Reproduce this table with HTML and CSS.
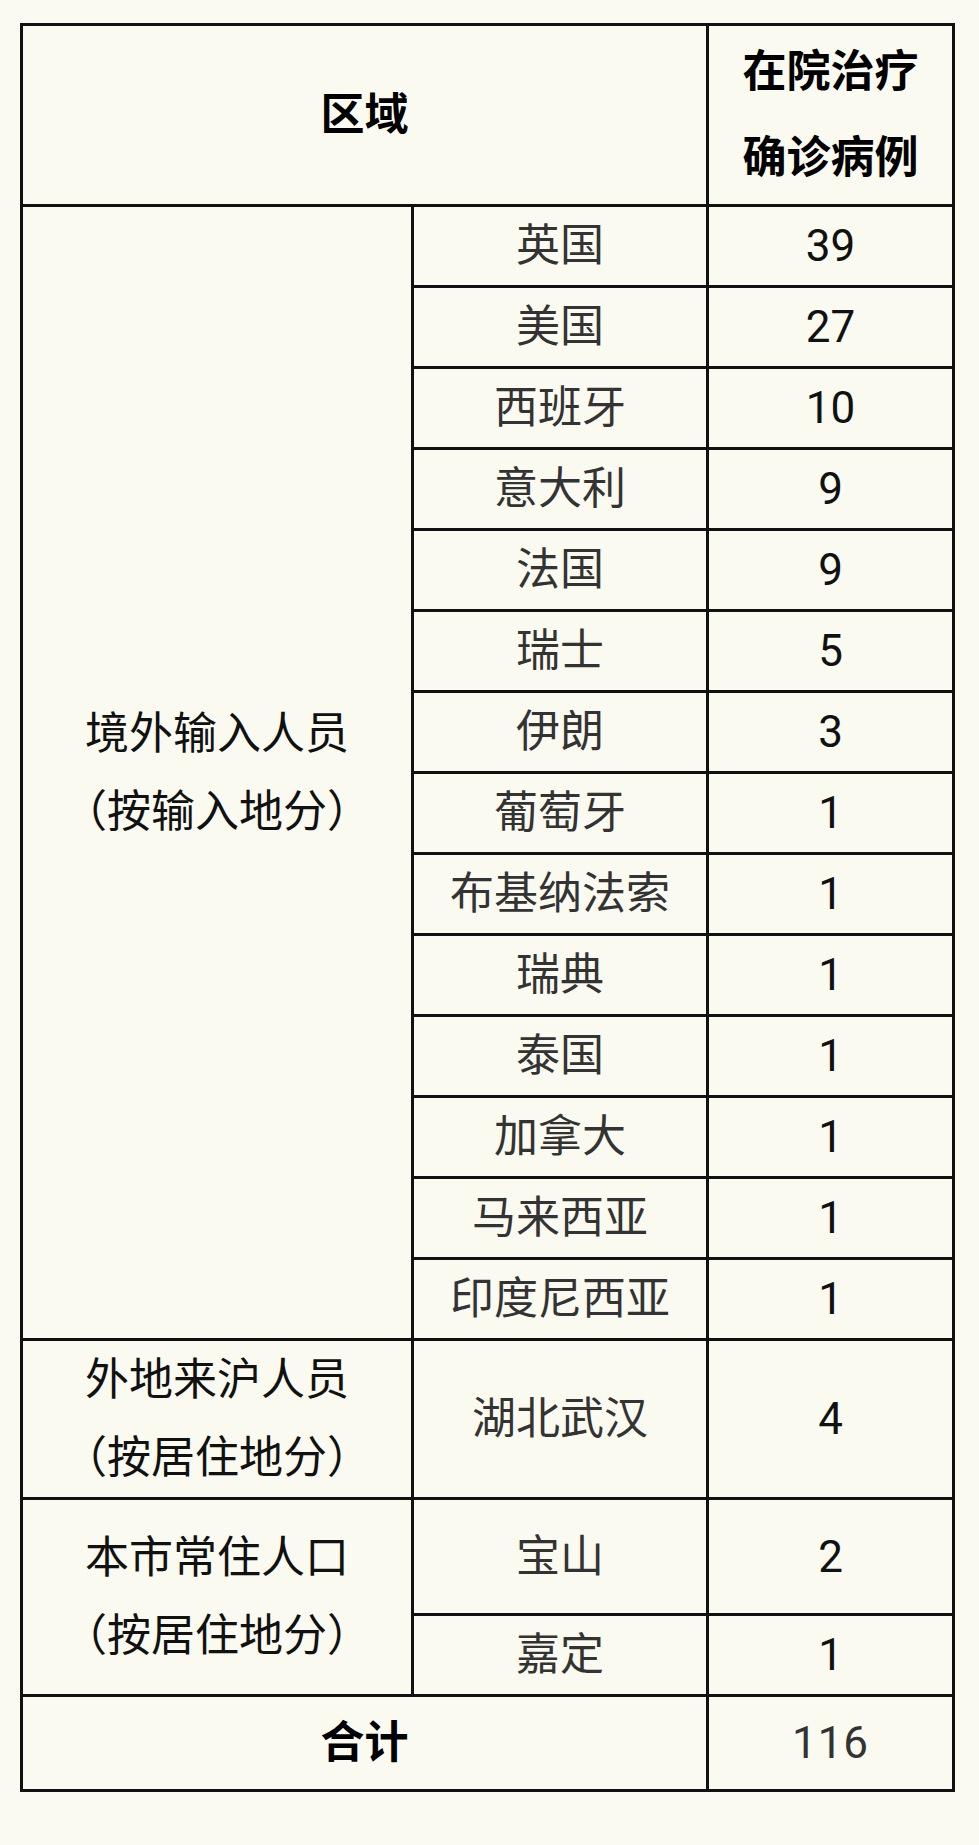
FILE: index.html
```html
<!DOCTYPE html>
<html lang="zh-CN">
<head>
<meta charset="utf-8">
<title>在院治疗确诊病例</title>
<link rel="stylesheet" href="styles.css">
</head>
<body>
<main class="page">
<table class="stats">
  <colgroup><col class="c1"><col class="c2"><col class="c3"></colgroup>
  <thead>
    <tr class="head"><th colspan="2">区域</th><th class="head-right">在院治疗<br>确诊病例</th></tr>
  </thead>
  <tbody>
    <tr class="r"><td rowspan="14" class="group">境外输入人员<br>（按输入地分）</td><td class="place">英国</td><td class="num">39</td></tr>
    <tr class="r"><td class="place">美国</td><td class="num">27</td></tr>
    <tr class="r"><td class="place">西班牙</td><td class="num">10</td></tr>
    <tr class="r"><td class="place">意大利</td><td class="num">9</td></tr>
    <tr class="r"><td class="place">法国</td><td class="num">9</td></tr>
    <tr class="r"><td class="place">瑞士</td><td class="num">5</td></tr>
    <tr class="r"><td class="place">伊朗</td><td class="num">3</td></tr>
    <tr class="r"><td class="place">葡萄牙</td><td class="num">1</td></tr>
    <tr class="r"><td class="place">布基纳法索</td><td class="num">1</td></tr>
    <tr class="r"><td class="place">瑞典</td><td class="num">1</td></tr>
    <tr class="r"><td class="place">泰国</td><td class="num">1</td></tr>
    <tr class="r"><td class="place">加拿大</td><td class="num">1</td></tr>
    <tr class="r"><td class="place">马来西亚</td><td class="num">1</td></tr>
    <tr class="r"><td class="place">印度尼西亚</td><td class="num">1</td></tr>
    <tr class="r-wh"><td class="group">外地来沪人员<br>（按居住地分）</td><td class="place">湖北武汉</td><td class="num">4</td></tr>
    <tr class="r-bs"><td rowspan="2" class="group">本市常住人口<br>（按居住地分）</td><td class="place">宝山</td><td class="num">2</td></tr>
    <tr class="r"><td class="place">嘉定</td><td class="num">1</td></tr>
    <tr class="total"><th colspan="2">合计</th><td class="num total-num">116</td></tr>
  </tbody>
</table>
</main>
</body>
</html>
```

FILE: styles.css
```css
html, body {
  margin: 0;
  padding: 0;
  background: #fafaf0;
}
body {
  font-family: Roboto, "Noto Sans CJK SC", sans-serif;
  color: #111;
}
.page {
  padding: 23px 25px 40px 20px;
}
.stats {
  border-collapse: collapse;
  width: 932px;
  table-layout: fixed;
  font-size: 44px;
}
.c1 { width: 391px; }
.c2 { width: 295px; }
.c3 { width: 246px; }
.stats th, .stats td {
  border: 3px solid #111;
  padding: 0;
  text-align: center;
  vertical-align: middle;
}
.stats th {
  font-weight: 700;
  color: #000;
}
.head th {
  height: 178px;
  line-height: 86px;
}
.r td { height: 78px; line-height: 78px; }
.r-wh td { height: 156px; line-height: 78px; }
.r-bs td { height: 113px; line-height: 78px; }
.total th, .total td { height: 92px; line-height: 78px; }
.group { color: #111; }
.place { color: #333; }
.num { color: #111; }
.total-num { color: #333; letter-spacing: 1px; }
```
